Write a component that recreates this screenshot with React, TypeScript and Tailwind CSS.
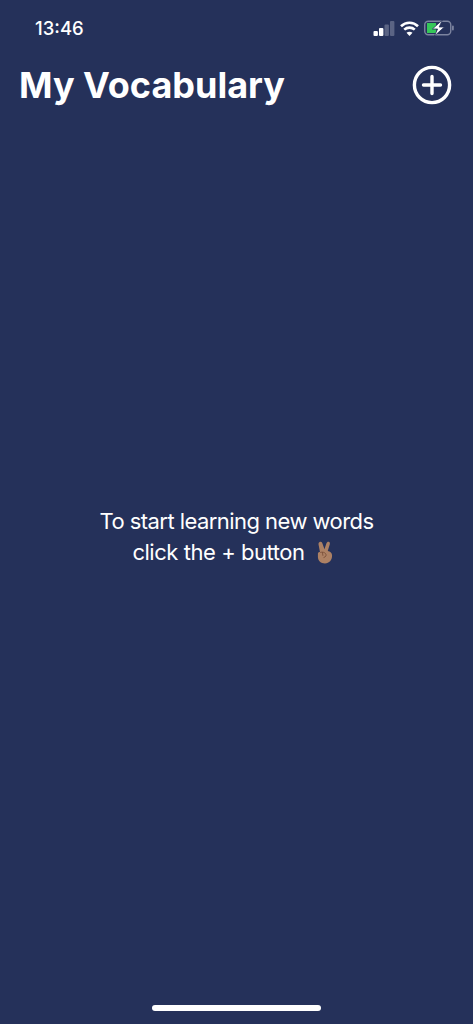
export default function App() {
  return (
    <div className="flex h-[1024px] w-[473px] flex-col overflow-hidden bg-[#25315A] text-white" style={{ fontFamily: "Inter, sans-serif" }}>
      <div className="flex h-[57px] shrink-0 items-start justify-between pl-[35px] pr-[19px] pt-[17px]">
        <span className="text-[18.5px] font-medium leading-[22px]">13:46</span>
        <div className="flex items-center gap-[5px] pt-[3px]">
          <svg width="22" height="15" viewBox="0 0 22 15">
            <rect x="0.5" y="10" width="4.4" height="5" rx="1" fill="#fff" />
            <rect x="6" y="7" width="4.4" height="8" rx="1" fill="#fff" />
            <rect x="11.5" y="3.5" width="4.4" height="11.5" rx="1" fill="#5b6484" />
            <rect x="17" y="0" width="4.4" height="15" rx="1" fill="#5b6484" />
          </svg>
          <svg width="19" height="15" viewBox="0 0 19 15" fill="none" stroke="#fff" strokeWidth="2.6">
            <path d="M1 5.2 C5.8 .6 13.2 .6 18 5.2" />
            <path d="M4.2 8.6 C7.2 5.9 11.8 5.9 14.8 8.6" />
            <path d="M9.5 15 L6.5 11.8 C8.2 10.4 10.8 10.4 12.5 11.8 Z" fill="#fff" stroke="none" />
          </svg>
          <svg width="30" height="16" viewBox="0 0 30 16">
            <rect x="0.75" y="1.25" width="26" height="13.5" rx="3.5" fill="none" stroke="#7c849f" strokeWidth="1.4" />
            <path d="M3 3 H12 V13 H3 Z" fill="#35c759" />
            <rect x="28" y="5.5" width="1.8" height="5" rx="0.9" fill="#7c849f" />
            <path d="M18.4 0 L8.4 9 H13.6 L10.4 16 L20.4 7 H15.2 Z" fill="#fff" stroke="#25315A" strokeWidth="0.8" />
          </svg>
        </div>
      </div>
      <header className="flex h-[56px] shrink-0 items-center justify-between pl-[19px] pr-[21px]">
        <h1 className="text-[36px] font-bold leading-[54px]">My Vocabulary</h1>
        <svg width="40" height="40" viewBox="0 0 40 40" fill="none" stroke="#fff" strokeWidth="3.4" strokeLinecap="round">
          <circle cx="20" cy="20" r="17.6" />
          <path d="M20 11.5 V28.5 M11.5 20 H28.5" />
        </svg>
      </header>
      <main className="flex flex-1 flex-col items-center justify-center pb-[40px] text-[22px] leading-[31px] tracking-[-0.55px]">
        <p>To start learning new words</p>
        <p className="flex items-center tracking-[-0.45px]">
          click the + button
          <svg className="ml-[10px] mr-[6px]" width="20" height="25" viewBox="0 0 22 26">
            <path d="M5.5 1.2 C7 .8 7.9 1.8 8.3 3.3 L10.4 9.5 L12.6 2.8 C13.1 1.4 14.2 .8 15.3 1.2 C16.4 1.7 16.6 2.9 16.2 4.1 L14 11.4 C16.8 11.9 18.8 13.6 18.8 16.4 C18.8 21.6 15.6 25 11 25 C6.5 25 3.4 22.5 3.2 18 L3.2 14.2 C3.4 13 4.4 12.4 5.5 12.6 L3.9 4.2 C3.7 2.8 4.4 1.6 5.5 1.2 Z" fill="#ad8164" />
            <path d="M5.8 13 C8 12.2 10.6 12.8 11.6 14.2 M8.2 12.6 L8.7 16.6 M11.6 14.2 C13 15.8 12 18 9.4 18.6" fill="none" stroke="#7a5039" strokeWidth="1" />
          </svg>
        </p>
      </main>
      <div className="flex h-[24px] shrink-0 justify-center pt-[5px]">
        <div className="h-[6px] w-[169px] rounded-full bg-white" />
      </div>
    </div>
  );
}
